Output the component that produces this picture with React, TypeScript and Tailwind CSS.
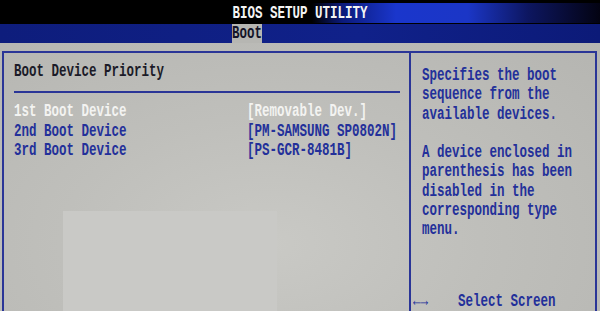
import React from "react";

function Line({
  children,
  className = "",
}: {
  children?: React.ReactNode;
  className?: string;
}) {
  return (
    <div className={`h-[19.25px] leading-[19.25px] whitespace-pre ${className}`}>
      {children ? (
        <span className="inline-block origin-[0_13px] scale-y-[1.45]">{children}</span>
      ) : null}
    </div>
  );
}

const rows: { label: string; value: string; active?: boolean }[] = [
  { label: "1st Boot Device", value: "[Removable Dev.]", active: true },
  { label: "2nd Boot Device", value: "[PM-SAMSUNG SP0802N]" },
  { label: "3rd Boot Device", value: "[PS-GCR-8481B]" },
];

const help = [
  "Specifies the boot",
  "sequence from the",
  "available devices.",
  "",
  "A device enclosed in",
  "parenthesis has been",
  "disabled in the",
  "corresponding type",
  "menu.",
  "",
  "",
  "",
];

export default function App() {
  return (
    <div className="w-[600px] h-[311px] overflow-hidden bg-black font-['Liberation_Mono',monospace] text-[12.5px] font-bold">
      {/* Title bar */}
      <div className="h-[24px] bg-black pt-[3px]">
        <div className="h-[20px] bg-[linear-gradient(90deg,#000_0%,#000_52%,#0b1a7a_57%,#1a36cc_66%,#1b36c6_78%,#0d1660_88%,#030312_100%)] text-center text-[#f4f4f4]">
          <div className="pt-[3px]">
            <Line>BIOS SETUP UTILITY</Line>
          </div>
        </div>
      </div>

      {/* Tab bar */}
      <div className="h-[19px] flex bg-[linear-gradient(90deg,#0e1d7c_0%,#10218a_60%,#0c1a78_100%)]">
        <div className="ml-[232px] w-[30px] h-[19px] bg-[#b6b6b2] text-[#141428] pt-[2px]">
          <Line>Boot</Line>
        </div>
      </div>

      {/* Body */}
      <div className="h-[268px] pt-[8px] bg-[radial-gradient(ellipse_at_45%_75%,#c9c9c5_0%,#bfbfbb_45%,#b5b5b1_100%)]">
        <div className="ml-[2px] w-[595px] h-[260px] border-2 border-b-0 border-[#2a3597] flex">
          {/* Left panel */}
          <div className="w-[405px] pl-[10px]">
            <div className="mt-[11px] text-[#1b1b28]">
              <Line>Boot Device Priority</Line>
            </div>
            <div className="mt-[8px] w-[386px] h-[2px] bg-[#2a3597]" />
            <div className="mt-[11px]">
              {rows.map((r) => (
                <div
                  key={r.label}
                  className={`flex ${r.active ? "text-[#f3f3f1]" : "text-[#23309a]"}`}
                >
                  <div className="w-[233px]">
                    <Line>{r.label}</Line>
                  </div>
                  <Line>{r.value}</Line>
                </div>
              ))}
            </div>
            <div className="mt-[49px] ml-[49px] w-[214px] h-[100px] bg-[#c9c9c6]" />
          </div>

          {/* Right panel */}
          <div className="flex-1 border-l-2 border-[#2a3597] pt-[15px] text-[#23309a]">
            <div className="pl-[11px]">
              {help.map((t, i) => (
                <Line key={i}>{t}</Line>
              ))}
            </div>
            <div className="pl-[2px] -mt-[2px] h-[13px] leading-[13px] whitespace-pre">
              <span className="inline-block origin-[0_10px] scale-y-[1.45]">
                {"←→    Select Screen"}
              </span>
            </div>
          </div>
        </div>
      </div>
    </div>
  );
}
